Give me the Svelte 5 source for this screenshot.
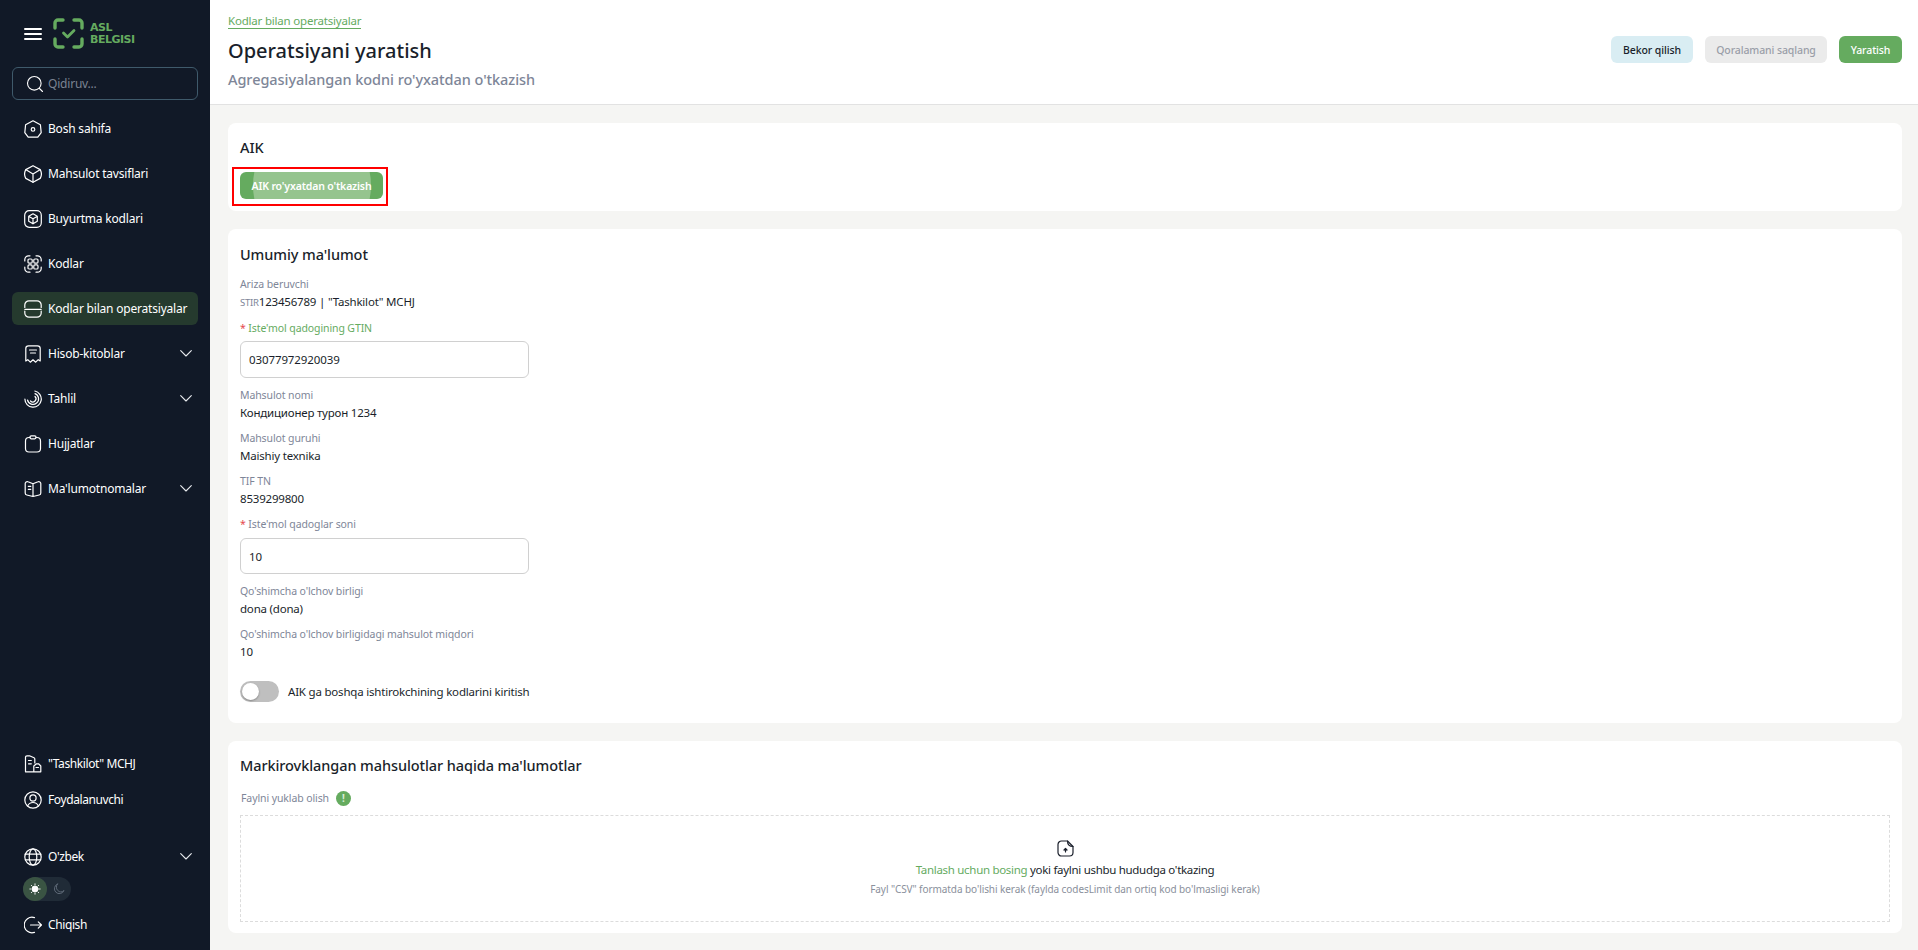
<script>
  const top = [
    { label: 'Bosh sahifa', icon: 'home' },
    { label: 'Mahsulot tavsiflari', icon: 'box' },
    { label: 'Buyurtma kodlari', icon: 'order' },
    { label: 'Kodlar', icon: 'codes' },
    { label: 'Kodlar bilan operatsiyalar', icon: 'ops', active: true },
    { label: 'Hisob-kitoblar', icon: 'receipt', chevron: true },
    { label: 'Tahlil', icon: 'spiral', chevron: true },
    { label: 'Hujjatlar', icon: 'clip' },
    { label: "Ma'lumotnomalar", icon: 'book', chevron: true }
  ];
  const paths = {
    home: '<path d="M9 .8 16.400 4.800 17.200 12.600 13.800 17.200H4.200L.8 12.600 1.600 4.800Z"/><circle cx="9" cy="9.400" r="1.800"/>',
    box: '<path d="M9 .7 16.200 4.600A9 9 0 0 1 16.200 13.400L9 17.300 1.800 13.400A9 9 0 0 1 1.800 4.600Z"/><path d="M2 4.800 9 9l7-4.200M9 9v8.300"/>',
    order: '<rect x=".7" y=".7" width="16.600" height="16.600" rx="4.500"/><path d="M9 3.800 13.300 6.200V11.200L9 13.800 4.700 11.200V6.200ZM4.900 6.400 9 8.800l4.100-2.400M9 8.800v5"/>',
    codes: '<path d="M.8 6V4.500A3.700 3.700 0 0 1 4.500.8H6M12 .8h1.500A3.700 3.700 0 0 1 17.200 4.500V6M17.200 12v1.500A3.700 3.700 0 0 1 13.500 17.200H12M6 17.200H4.500A3.700 3.700 0 0 1 .8 13.500V12"/><rect x="4" y="4" width="4.200" height="4.200" rx="1.100"/><rect x="9.800" y="4" width="4.200" height="4.200" rx="1.100"/><rect x="4" y="9.800" width="4.200" height="4.200" rx="1.100"/><rect x="9.800" y="9.800" width="4.200" height="4.200" rx="1.100"/>',
    ops: '<path d="M.8 7.500V5A4.200 4.200 0 0 1 5 .8h8A4.200 4.200 0 0 1 17.200 5v2.500M.8 11v2A4.200 4.200 0 0 0 5 17.200h8a4.200 4.200 0 0 0 4.200-4.200v-2M.8 9.300h16.400"/>',
    receipt: '<path d="M1.800 16V3.500A2.700 2.700 0 0 1 4.500.8h9a2.700 2.700 0 0 1 2.700 2.700V16l-2-1.300-2.500 2.500L9 14.800 6.300 17.200 3.800 14.700Z"/><path d="M5.500 5h7M6.500 8h5"/>',
    spiral: '<path d="M10.800 1A8.200 8.200 0 1 1 .9 9"/><path d="M11 3.600A5.600 5.600 0 1 1 3.500 10"/><path d="M11 6.500A3 3 0 0 1 6.500 11"/>',
    clip: '<path d="M6 2.500H5A3.500 3.500 0 0 0 1.500 6v7.500A3.500 3.500 0 0 0 5 17h8a3.500 3.500 0 0 0 3.500-3.500V6A3.500 3.500 0 0 0 13 2.500h-1"/><rect x="6" y=".8" width="6" height="3" rx="1.200"/>',
    book: '<path d="M9 3.800 4 1.800A2 2 0 0 0 1.200 3.600V13A2 2 0 0 0 2.800 15L9 16.500 15.200 15A2 2 0 0 0 16.800 13V3.600A2 2 0 0 0 14 1.800L9 3.800ZM9 3.800v12.700M4.300 6.300H6.800M4.300 9.300H6.800"/>',
    org: '<path d="M1.500 16.800V2.300A1.500 1.500 0 0 1 3 .8H5.500l4.500 2A1.500 1.500 0 0 1 10.800 4.300V8M1.500 16.800h15.300V11L14.500 8.800h-2L9.800 11v5.800"/><path d="M4.500 5.500h2.800M4.500 8.800h2.800M12 12.500h2.500"/>',
    user: '<circle cx="9" cy="9" r="8.200"/><circle cx="9" cy="7" r="3.100"/><path d="M3.600 15C4.800 12.200 7 11.500 9 11.500s4.200.7 5.400 3.500"/>',
    globe: '<circle cx="9" cy="9" r="8.200"/><ellipse cx="9" cy="9" rx="3.800" ry="8.200"/><path d="M1.300 6.200h15.400M1.300 11.800h15.400"/>',
    logout: '<path d="M10.500 1.600A7.800 7.800 0 1 0 10.500 16.400"/><path d="M6.500 9h11M14.300 5.800 17.500 9l-3.200 3.200"/>'
  };
</script>

{#snippet icon(name)}
  <svg class="ico" viewBox="0 0 18 18" fill="none" stroke="currentColor" stroke-width="1.200" stroke-linecap="round" stroke-linejoin="round">{@html paths[name]}</svg>
{/snippet}

{#snippet chev()}
  <svg class="chev" viewBox="0 0 12 7" fill="none" stroke="currentColor" stroke-width="1.100" stroke-linecap="round" stroke-linejoin="round"><path d="M.7.7 6 6 11.300.7"/></svg>
{/snippet}

<div class="page">
  <aside class="side">
    <div class="brand">
      <span class="burger"><i></i><i></i><i></i></span>
      <svg class="mark" viewBox="0 0 31 31" fill="none" stroke="#65ab5f" stroke-width="3.400" stroke-linecap="round" stroke-linejoin="round">
        <path d="M2 10V5a3 3 0 0 1 3-3H10M21 2h5a3 3 0 0 1 3 3v5M29 21v5a3 3 0 0 1-3 3H21M10 29H5a3 3 0 0 1-3-3V21"/>
        <path d="M10.500 15 14.500 19 21 12.500" stroke-width="2.800"/>
      </svg>
      <div class="wordmark"><span>ASL</span><span>BELGISI</span></div>
    </div>
    <div class="search">
      <svg class="sicon" viewBox="0 0 18 18" fill="none" stroke="currentColor" stroke-width="1.100" stroke-linecap="round"><circle cx="8.300" cy="8.300" r="6.800"/><path d="M13.500 13.500 16.500 16.500"/></svg>
      <span>Qidiruv...</span>
    </div>
    <nav class="nav">
      {#each top as item}
        <div class="item" class:active={item.active}>
          {@render icon(item.icon)}
          <span class="grow">{item.label}</span>
          {#if item.chevron}{@render chev()}{/if}
        </div>
      {/each}
    </nav>
    <div class="bottom">
      <div class="item tight">{@render icon('org')}<span class="grow">"Tashkilot" MCHJ</span></div>
      <div class="item tight">{@render icon('user')}<span class="grow">Foydalanuvchi</span></div>
      <div class="item tight lang">{@render icon('globe')}<span class="grow">O'zbek</span>{@render chev()}</div>
      <div class="theme">
        <span class="thumb">
          <svg viewBox="0 0 12 12" width="12" height="12" fill="#fff" stroke="#fff" stroke-width=".9" stroke-linecap="round"><circle cx="6" cy="6" r="3"/><path d="M6 .8v1M6 10.200v1M.8 6h1M10.200 6h1M2.300 2.300l.7.7M9 9l.7.7M2.300 9.700 3 9M9 3l.7-.7"/></svg>
        </span>
        <span class="moon">
          <svg viewBox="0 0 12 12" width="12" height="12" fill="none" stroke="#5d6876" stroke-width="1" stroke-linecap="round" stroke-linejoin="round"><path d="M4.500 1A5 5 0 1 0 11 7.500 4.600 4.600 0 0 1 4.500 1Z"/></svg>
        </span>
      </div>
      <div class="item tight">{@render icon('logout')}<span class="grow">Chiqish</span></div>
    </div>
  </aside>

  <main class="main">
    <header class="head">
      <div class="titles">
        <a class="crumb" href="#top">Kodlar bilan operatsiyalar</a>
        <h1>Operatsiyani yaratish</h1>
        <p>Agregasiyalangan kodni ro'yxatdan o'tkazish</p>
      </div>
      <div class="actions">
        <button class="btn cancel">Bekor qilish</button>
        <button class="btn draft">Qoralamani saqlang</button>
        <button class="btn primary">Yaratish</button>
      </div>
    </header>

    <div class="content">
      <section class="card aik">
        <h2>AIK</h2>
        <div class="cta">
          <button class="aikbtn"><span class="ripple"></span><span class="aiklabel">AIK ro'yxatdan o'tkazish</span></button>
          <span class="mark-box"></span>
        </div>
      </section>

      <section class="card general">
        <h2>Umumiy ma'lumot</h2>
        <div class="field first">
          <div class="lab">Ariza beruvchi</div>
          <div class="val"><span class="stir">STIR</span>123456789 | "Tashkilot" MCHJ</div>
        </div>
        <div class="lab req green"><b>*</b> Iste'mol qadogining GTIN</div>
        <div class="input tall">03077972920039</div>
        <div class="field"><div class="lab">Mahsulot nomi</div><div class="val">Кондиционер турон 1234</div></div>
        <div class="field"><div class="lab">Mahsulot guruhi</div><div class="val">Maishiy texnika</div></div>
        <div class="field"><div class="lab">TIF TN</div><div class="val">8539299800</div></div>
        <div class="lab req second"><b>*</b> Iste'mol qadoglar soni</div>
        <div class="input">10</div>
        <div class="field"><div class="lab">Qo'shimcha o'lchov birligi</div><div class="val">dona (dona)</div></div>
        <div class="field"><div class="lab">Qo'shimcha o'lchov birligidagi mahsulot miqdori</div><div class="val">10</div></div>
        <div class="switchrow"><span class="switch"><span></span></span><span class="val">AIK ga boshqa ishtirokchining kodlarini kiritish</span></div>
      </section>

      <section class="card market">
        <h2>Markirovklangan mahsulotlar haqida ma'lumotlar</h2>
        <div class="filelabel"><span>Faylni yuklab olish</span><span class="badge">!</span></div>
        <div class="drop">
          <svg class="upl" viewBox="0 0 17 17" fill="none" stroke="#1a1f2b" stroke-width="1.200" stroke-linecap="round" stroke-linejoin="round"><path d="M10.500 1H4.500A3.500 3.500 0 0 0 1 4.500v8A3.500 3.500 0 0 0 4.500 16h8a3.500 3.500 0 0 0 3.500-3.500V6.500L10.500 1Z"/><path d="M10.500 1c0 3 1.500 5.500 5.500 5.500"/><path d="M8.500 12V8.500M7 10l1.500-1.500L10 10"/></svg>
          <div class="drophint"><span class="pick">Tanlash uchun bosing</span> yoki faylni ushbu hududga o'tkazing</div>
          <div class="dropnote">Fayl "CSV" formatda bo'lishi kerak (faylda codesLimit dan ortiq kod bo'lmasligi kerak)</div>
        </div>
      </section>
    </div>
  </main>
</div>

<style>
  :global(body) { margin: 0; font-family: "Noto Sans", "Open Sans", sans-serif; overflow: hidden; }
  * { box-sizing: border-box; }
  .page { display: flex; height: 950px; overflow: hidden; background: #f5f5f3; }

  .side { width: 210px; flex: none; background: #111927; color: #fff; display: flex; flex-direction: column; padding: 18px 12px 0; font-size: 12px; letter-spacing: -.2px; }
  .brand { display: flex; align-items: center; height: 31px; padding-left: 12px; margin-bottom: 18px; }
  .burger { display: flex; flex-direction: column; gap: 3px; width: 18px; margin-right: 11px; }
  .burger i { display: block; height: 2px; background: #fff; border-radius: 1px; }
  .mark { width: 31px; height: 31px; flex: none; margin-right: 6px; }
  .wordmark { display: flex; flex-direction: column; color: #65ab5f; font-family: "DejaVu Sans", sans-serif; font-weight: 700; font-size: 11px; line-height: 12px; letter-spacing: -.5px; }
  .search { height: 33px; border: 1px solid #3f5a6b; border-radius: 6px; display: flex; align-items: center; padding-left: 13px; color: #7b8492; }
  .sicon { width: 18px; height: 18px; color: #fff; margin-right: 4px; }
  .nav { display: flex; flex-direction: column; gap: 12px; margin-top: 12px; }
  .item { height: 33px; display: flex; align-items: center; padding: 0 6px 0 12px; border-radius: 6px; color: #fff; white-space: nowrap; }
  .item.active { background: #253a2e; }
  .ico { width: 18px; height: 18px; flex: none; margin-right: 6px; }
  .grow { flex: 1; }
  .chev { width: 12px; height: 7px; flex: none; color: #e8eaee; }
  .bottom { margin-top: auto; padding-bottom: 9px; display: flex; flex-direction: column; }
  .item.tight { letter-spacing: -.4px; }
  .item.tight + .item.tight { margin-top: 3px; }
  .item.lang { margin-top: 24px !important; }
  .theme { display: flex; width: 48px; height: 24px; border-radius: 12px; background: #202b37; margin: 4px 0 7px 11px; }
  .thumb, .moon { width: 24px; height: 24px; display: flex; align-items: center; justify-content: center; border-radius: 50%; }
  .thumb { background: #3a5443; }

  .main { flex: 1; min-width: 0; display: flex; flex-direction: column; }
  .head { height: 105px; flex: none; background: #fff; border-bottom: 1px solid #e2e2e2; display: flex; justify-content: space-between; padding: 0 16px 0 18px; }
  .titles { padding-top: 13px; }
  .crumb { display: block; width: max-content; font-size: 11.500px; letter-spacing: -.2px; line-height: 15px; color: #65ab5f; text-decoration: none; border-bottom: 1px solid #65ab5f; }
  h1 { margin: 0; font-size: 20px; line-height: 28px; font-weight: 500; color: #1a1f2b; padding-top: 8px; }
  .titles p { margin: 4px 0 0; font-size: 14.500px; letter-spacing: -.06px; line-height: 20px; font-weight: 500; color: #7e8698; }
  .actions { display: flex; gap: 12px; padding-top: 36px; }
  .btn { height: 27px; border: 0; border-radius: 6px; font: 500 10.500px "Noto Sans", sans-serif; letter-spacing: -.1px; padding: 0; }
  .cancel { background: #d9edf3; color: #1a1f2b; width: 82px; }
  .draft { background: #ebebeb; color: #9a9ea8; width: 122px; }
  .primary { background: #65ab5f; color: #fff; width: 63px; }

  .content { padding: 18px 16px 0 18px; display: flex; flex-direction: column; gap: 18px; }
  .card { background: #fff; border-radius: 8px; padding: 12px; }
  h2 { margin: 0; font-size: 14.500px; letter-spacing: -.08px; line-height: 24px; font-weight: 500; color: #1a1f2b; }
  .aik { height: 88px; }
  .cta { position: relative; width: 143px; margin-top: 13px; }
  .aikbtn { position: relative; display: block; width: 143px; height: 27px; border: 0; border-radius: 6px; background: #65ab5f; overflow: hidden; padding: 0; font: 600 10.500px "Noto Sans", sans-serif; letter-spacing: -.15px; color: #fff; }
  .ripple { position: absolute; left: 13px; right: 12px; top: -50px; bottom: -50px; border-radius: 50%; background: #95c48e; }
  .aiklabel { position: relative; }
  .mark-box { position: absolute; left: -8px; top: -5px; width: 156px; height: 39px; border: 2px solid #f00; pointer-events: none; }

  .general { height: 494px; padding-top: 13px; }
  .lab { font-size: 10.500px; letter-spacing: -.1px; line-height: 17px; color: #7e8698; }
  .val { font-size: 11.500px; letter-spacing: -.2px; line-height: 18px; color: #1a1f2b; }
  .field { margin-top: 8px; }
  .field.first { margin-top: 10px; }
  .stir { font-size: 9.500px; color: #7e8698; }
  .req { margin-top: 8px; }
  .req.second { margin-top: 8px; }
  .req b { color: #e5484d; font-weight: 400; }
  .green { color: #65ab5f; }
  .input { width: 289px; height: 36px; margin-top: 5px; border: 1px solid #d0d0d0; border-radius: 6px; display: flex; align-items: center; padding-left: 8px; font-size: 11.500px; letter-spacing: -.1px; color: #1a1f2b; background: #fff; }
  .input.tall { height: 37px; margin-top: 4px; }
  .input + .field { margin-top: 9px; }
  .switchrow { display: flex; align-items: center; gap: 9px; margin-top: 20px; }
  .switch { width: 39px; height: 21px; border-radius: 11px; background: #bfbfbf; padding: 2px; display: block; }
  .switch span { display: block; width: 17px; height: 17px; border-radius: 50%; background: #fff; box-shadow: 0 1px 2px rgba(0,0,0,.3); }

  .market { height: 192px; padding-top: 12px; }
  .filelabel { display: flex; align-items: center; gap: 7px; font-size: 10.500px; letter-spacing: -.1px; color: #7e8698; padding-left: 1px; margin-top: 13px; height: 16px; }
  .badge { width: 15px; height: 15px; border-radius: 50%; background: #65ab5f; color: #d9ecd6; font-size: 10px; font-weight: 700; display: flex; align-items: center; justify-content: center; }
  .drop { margin-top: 9px; height: 107px; border: 1px dashed #dcdcdc; display: flex; flex-direction: column; align-items: center; padding-top: 24px; }
  .upl { width: 17px; height: 17px; }
  .drophint { font-size: 11.500px; letter-spacing: -.3px; line-height: 18px; color: #1a1f2b; margin-top: 4px; }
  .pick { color: #65ab5f; }
  .dropnote { font-size: 10px; letter-spacing: -.07px; line-height: 15px; color: #8a909c; margin-top: 3px; }
</style>
